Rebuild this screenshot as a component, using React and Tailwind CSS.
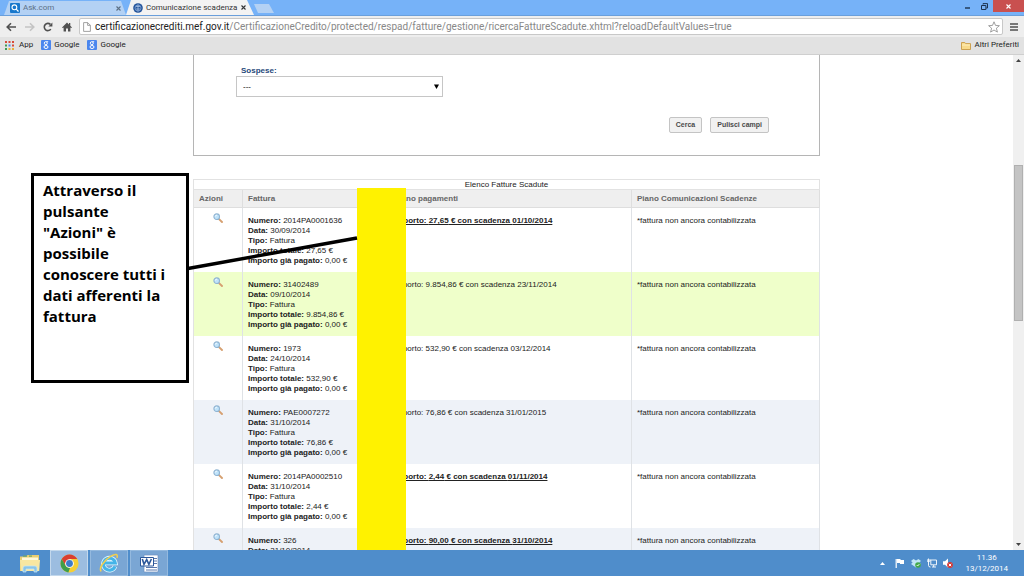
import React from "react";

const ui = "font-[Roboto,'Open_Sans',sans-serif]";

const invoices = [
  { numero: "2014PA0001636", data: "30/09/2014", totale: "27,65", scadenza: "01/10/2014", due: true, bg: "bg-white" },
  { numero: "31402489", data: "09/10/2014", totale: "9.854,86", scadenza: "23/11/2014", due: false, bg: "bg-[#efffca]" },
  { numero: "1973", data: "24/10/2014", totale: "532,90", scadenza: "03/12/2014", due: false, bg: "bg-white" },
  { numero: "PAE0007272", data: "31/10/2014", totale: "76,86", scadenza: "31/01/2015", due: false, bg: "bg-[#eef2f8]" },
  { numero: "2014PA0002510", data: "31/10/2014", totale: "2,44", scadenza: "01/11/2014", due: true, bg: "bg-white" },
  { numero: "326", data: "31/10/2014", totale: "90,00", scadenza: "31/10/2014", due: true, bg: "bg-[#eef2f8]" },
];

function Magnifier() {
  return (
    <svg className="size-[10px]" viewBox="0 0 10 10" aria-hidden="true">
      <path d="M5.8 5.8 9 9" stroke="#d6a070" strokeWidth="1.9" strokeLinecap="round" />
      <circle cx="3.7" cy="3.7" r="2.8" fill="#bfe3fa" stroke="#90b4d2" strokeWidth="1.1" />
      <path d="M2.3 3.5a1.5 1.5 0 0 1 1.5-1.3" stroke="#fff" strokeWidth=".9" fill="none" />
    </svg>
  );
}

function GoogleIcon() {
  return (
    <svg className="size-[10px]" viewBox="0 0 10 10" aria-hidden="true">
      <rect width="10" height="10" rx="1" fill="#4a86ee" />
      <circle cx="4.8" cy="3.2" r="1.5" fill="none" stroke="#fff" strokeWidth="1" />
      <ellipse cx="5" cy="7" rx="2" ry="1.5" fill="none" stroke="#fff" strokeWidth="1" />
      <path d="M5.4 1.6h1.8M5 4.6l.6 1" stroke="#fff" strokeWidth=".8" />
    </svg>
  );
}

function Close() {
  return (
    <svg className="size-[5px]" viewBox="0 0 5 5" aria-hidden="true">
      <path d="m.5.5 4 4m0-4-4 4" stroke="currentColor" strokeWidth="1.1" />
    </svg>
  );
}

function TabStrip() {
  return (
    <header className={`flex h-4 shrink-0 items-end border-b border-[#6a9fdb] bg-[#76b2f8] pl-1 text-[8px] leading-[14px] ${ui}`}>
      <div className="flex h-[14px] w-[122px] items-center bg-[#b3d1f4] pr-[5px] pl-[6px] text-[#5c7086] [clip-path:polygon(5px_0,117px_0,100%_100%,0_100%)]">
        <svg className="size-[10px]" viewBox="0 0 10 10" aria-hidden="true">
          <rect width="10" height="10" rx="1" fill="#1878cc" />
          <circle cx="4.4" cy="4.3" r="2.4" fill="none" stroke="#fff" strokeWidth="1.1" />
          <path d="m6.2 6.2 2.3 2.3" stroke="#fff" strokeWidth="1.2" />
        </svg>
        <span className="ml-[3px] flex-1">Ask.com</span>
        <button aria-label="Chiudi Ask.com"><Close /></button>
      </div>
      <div className="flex h-[15px] w-[128px] items-center bg-[#f3f3f3] pr-[10px] pl-[7px] text-[#333] [clip-path:polygon(5px_0,121px_0,100%_100%,0_100%)]">
        <svg className="size-[10px] shrink-0" viewBox="0 0 10 10" aria-hidden="true">
          <circle cx="5" cy="5" r="4.8" fill="#24549a" />
          <circle cx="5" cy="5" r="3" fill="none" stroke="#8fb2df" strokeWidth=".7" />
          <path d="M5 1.5v7M3 3.5h4M3 6h4" stroke="#b9cfec" strokeWidth=".7" />
        </svg>
        <span className="ml-[3px] flex-1 whitespace-nowrap">Comunicazione scadenza</span>
        <button className="ml-1" aria-label="Chiudi scheda"><Close /></button>
      </div>
      <button aria-label="Nuova scheda" className="mb-[2px] h-[9px] w-[20px] bg-[#b3d1f4] [clip-path:polygon(0_0,15px_0,100%_100%,4px_100%)]" />
      <div className="ml-auto flex self-start text-[#1c3350]">
        <button aria-label="Riduci a icona" className="grid h-3 w-4 place-items-center">
          <svg className="size-[6px]" viewBox="0 0 6 6"><path d="M0 5h5" stroke="currentColor" strokeWidth="1.4" /></svg>
        </button>
        <button aria-label="Ripristina" className="grid h-3 w-[17px] place-items-center">
          <svg className="size-[7px]" viewBox="0 0 7 7" fill="none" stroke="currentColor"><path d="M2 1.5V.6h4.5V5H5.2" /><path d="M.5 2.5h4.4v4H.5z" /></svg>
        </button>
        <button aria-label="Chiudi" className="grid h-3 w-[31px] place-items-center bg-[#c9504f] text-white"><Close /></button>
      </div>
    </header>
  );
}

function Toolbar() {
  return (
    <div className={`flex h-[21px] shrink-0 items-center bg-[#eeeeee] pr-[6px] pl-[6px] text-[#505050] ${ui}`}>
      <button aria-label="Indietro">
        <svg className="size-[10px]" viewBox="0 0 10 10" fill="none" stroke="currentColor" strokeWidth="1.6"><path d="M10 5H1.5M5 1.2 1.2 5 5 8.8" /></svg>
      </button>
      <button aria-label="Avanti" className="ml-[9px] text-[#c4c4c4]">
        <svg className="size-[10px]" viewBox="0 0 10 10" fill="none" stroke="currentColor" strokeWidth="1.6"><path d="M0 5h8.5M5 1.2 8.8 5 5 8.8" /></svg>
      </button>
      <button aria-label="Ricarica" className="ml-[8px]">
        <svg className="size-[10px]" viewBox="0 0 10 10"><path d="M7.8 7.1A3.6 3.6 0 1 1 7.4 2.4" fill="none" stroke="currentColor" strokeWidth="1.6" /><path d="M9.4.5v4H5.4z" fill="currentColor" /></svg>
      </button>
      <button aria-label="Pagina iniziale" className="ml-[9px]">
        <svg className="size-[10px]" viewBox="0 0 10 10" fill="currentColor"><path d="M5 .5 0 5.4l.8.7.8-.7v4H4V6.5h2v2.9h2.4v-4l.8.7.8-.7-1.7-1.6V1H7v1.5z" /></svg>
      </button>
      <div className="ml-[7px] flex h-[17px] min-w-0 flex-1 items-center rounded-[2px] border border-[#c8c8c8] bg-white pr-[2px] pl-[3px] text-[10px] leading-[15px]">
        <svg className="h-[10px] w-2 shrink-0" viewBox="0 0 8 10" fill="none" stroke="#999" strokeWidth=".9"><path d="M.6.6h4.1l2.7 2.7v6.1H.6zM4.6.6v2.8h2.8" /></svg>
        <label htmlFor="address" className="ml-[4px] text-[#222]">certificazionecrediti.mef.gov.it</label>
        <input
          id="address"
          className="min-w-0 flex-1 bg-transparent text-[#888] outline-none"
          defaultValue="/CertificazioneCredito/protected/respad/fatture/gestione/ricercaFattureScadute.xhtml?reloadDefaultValues=true"
        />
        <button aria-label="Aggiungi ai preferiti">
          <svg className="size-[12px]" viewBox="0 0 12 12" fill="#fff" stroke="#888" strokeWidth=".8"><path d="m6 .8 1.5 3.6 3.9.3-3 2.5 1 3.9L6 9l-3.4 2.1 1-3.9-3-2.5 3.9-.3z" /></svg>
        </button>
      </div>
      <button aria-label="Menu" className="ml-[7px]">
        <svg className="size-[8px]" viewBox="0 0 8 8" stroke="currentColor" strokeWidth="1.6"><path d="M0 1h8M0 4h8M0 7h8" /></svg>
      </button>
    </div>
  );
}

function Bookmarks() {
  return (
    <nav className={`flex h-[18px] shrink-0 items-center border-b border-[#cfcfcf] bg-[#e2e2e2] px-[5px] pb-px text-[8px] text-[#222] ${ui}`}>
      <a href="#app" className="flex items-center gap-[5px]">
        <svg className="size-[9px]" viewBox="0 0 9 9" aria-hidden="true">
          <g fill="#d84a38"><path d="M0 0h2v2H0zM3.5 0h2v2h-2zM7 0h2v2H7zM7 3.5h2v2H7z" /></g>
          <g fill="#3f9b52"><path d="M0 3.5h2v2H0zM0 7h2v2H0z" /></g>
          <path fill="#4b84e8" d="M3.5 3.5h2v2h-2z" />
          <path fill="#e8b23a" d="M3.5 7h2v2h-2zM7 7h2v2H7z" />
        </svg>
        App
      </a>
      <a href="#google-1" className="ml-[8px] flex items-center gap-[3px]"><GoogleIcon />Google</a>
      <a href="#google-2" className="ml-[8px] flex items-center gap-[3px]"><GoogleIcon />Google</a>
      <button className="ml-auto flex items-center gap-[4px]">
        <svg className="h-[9px] w-[10px]" viewBox="0 0 10 9" aria-hidden="true"><path d="M.5 8.5v-7h3.3l.9 1.1h4.8v5.9z" fill="#f8da8b" stroke="#c89a45" strokeWidth=".9" /><path d="M1 4h8" stroke="#fff0bd" /></svg>
        Altri Preferiti
      </button>
    </nav>
  );
}

function SearchPanel() {
  const button = "h-4 rounded-[2px] border border-[#c4c4c4] bg-[#f1f1f1] px-[6px] font-bold text-[#4a4a4a]";
  return (
    <form className="h-[101px] border border-t-0 border-[#b5b5b5] pt-[11px] text-[7px] leading-[10px]" onSubmit={(e) => e.preventDefault()}>
      <div className="ml-[42px] w-[207px]">
        <label htmlFor="sospese" className="ml-[5px] block text-[8px] font-bold text-[#26487a]">Sospese:</label>
        <div className="relative">
          <select id="sospese" className="block h-[21px] w-full appearance-none border border-[#c6c6c6] bg-white px-[6px] text-[8px] text-black">
            <option>---</option>
          </select>
          <svg className="pointer-events-none absolute top-2 right-[4px] h-[5px] w-[5px]" viewBox="0 0 5 5" aria-hidden="true"><path d="M0 .5h5L2.5 5z" /></svg>
        </div>
      </div>
      <div className="mt-5 mr-[50px] flex justify-end gap-2">
        <button className={button}>Cerca</button>
        <button type="button" className={button}>Pulisci campi</button>
      </div>
    </form>
  );
}

function InvoiceTable() {
  const head = "border-r border-b border-[#dedede] px-[5px] text-left text-[8px] font-bold text-[#666]";
  const cell = "border-r border-[#dfe2e6] px-[5px] pt-2";
  return (
    <table className="mt-[23px] w-full table-fixed border-separate border-spacing-0 border-t border-l border-[#e2e2e2] text-[8px] leading-[10px] text-[#222]">
      <caption className="h-[10px] border border-b-0 border-[#e2e2e2]">Elenco Fatture Scadute</caption>
      <colgroup>
        <col className="w-[49px]" />
        <col className="w-[146px]" />
        <col />
        <col className="w-[188px]" />
      </colgroup>
      <thead>
        <tr className="h-[18px] bg-[#efefef]">
          <th className={head}>Azioni</th>
          <th className={head}>Fattura</th>
          <th className={head}>Piano pagamenti</th>
          <th className={head}>Piano Comunicazioni Scadenze</th>
        </tr>
      </thead>
      <tbody>
        {invoices.map((i) => (
          <tr key={i.numero} className={`h-16 align-top ${i.bg}`}>
            <td className="border-r border-[#dfe2e6] pt-[5px]">
              <button aria-label={`Dettaglio fattura ${i.numero}`} className="mx-auto block"><Magnifier /></button>
            </td>
            <td className={cell}>
              <div><b>Numero:</b> {i.numero}</div>
              <div><b>Data:</b> {i.data}</div>
              <div><b>Tipo:</b> Fattura</div>
              <div><b>Importo totale:</b> {i.totale} €</div>
              <div><b>Importo già pagato:</b> 0,00 €</div>
            </td>
            <td className={cell}>
              <span className={i.due ? "font-bold underline" : ""}>Importo: {i.totale} € con scadenza {i.scadenza}</span>
            </td>
            <td className={cell}>*fattura non ancora contabilizzata</td>
          </tr>
        ))}
      </tbody>
    </table>
  );
}

function Annotations() {
  return (
    <>
      <div className="absolute top-[133px] bottom-0 left-[164px] w-[49px] bg-[#fff200]" />
      <svg className="pointer-events-none absolute top-[178px] left-[-6px] h-[40px] w-[172px]" viewBox="0 0 172 40" aria-hidden="true">
        <path d="M1 35.5 170 5" stroke="#000" strokeWidth="3.4" />
      </svg>
      <aside className="absolute top-[118px] left-[-162px] h-[210px] w-[158px] border-[3px] border-black bg-white pt-1 pr-[17px] pl-[9px] font-['Open_Sans','Noto_Sans',sans-serif] text-[15px] leading-[21px] font-bold text-black">
        Attraverso il pulsante "Azioni" è possibile conoscere tutti i dati afferenti la fattura
      </aside>
    </>
  );
}

function Taskbar() {
  const active = "grid h-full place-items-center border border-[#94b9de] bg-[#7aa6d4]";
  return (
    <footer className={`flex h-[26px] shrink-0 items-center bg-[#4f8dcb] pr-4 pl-[10px] text-white ${ui}`}>
      <button aria-label="Esplora file" className="grid h-full w-10 place-items-center">
        <svg className="h-[19px] w-[22px]" viewBox="0 0 22 19">
          <path d="M1 17V2.5h6L8.5 1H20v16z" fill="#e9cd72" />
          <path d="M3 3.5h16V7H3z" fill="#fff8d9" />
          <path d="M4 2.2h4M10 2.2h3" stroke="#70a86a" strokeWidth="1.2" />
          <path d="M1 6h20l-.8 11H1.8z" fill="#f8e7a1" />
          <path d="M4 18v-4q0-2 2-2h10q2 0 2 2v4h-3v-3H7v3z" fill="#8bc5e8" stroke="#c9e9f8" strokeWidth=".7" />
        </svg>
      </button>
      <button aria-label="Google Chrome" className="grid h-full w-[38px] place-items-center border border-[#c3d8ec] bg-[#9cbde0]">
        <svg className="size-[19px]" viewBox="0 0 20 20">
          <circle cx="10" cy="10" r="9.5" fill="#f5cf35" />
          <path d="M10 10 5.9 12.4 1.8 5.3A9.5 9.5 0 0 1 18.2 5.3H10z" fill="#da3e31" />
          <path d="M1.8 5.3 6 12.4q1.6 2.5 4.6 2.2L8.8 19.4A9.5 9.5 0 0 1 1.8 5.3z" fill="#3f9e4a" />
          <circle cx="10" cy="10" r="4.6" fill="#fff" />
          <circle cx="10" cy="10" r="3.6" fill="#3d7bc8" />
        </svg>
      </button>
      <button aria-label="Internet Explorer" className={`ml-[2px] w-[38px] ${active}`}>
        <svg className="size-[20px]" viewBox="0 0 20 20" fill="none">
          <path d="M16 13.4A6 6 0 1 1 16.3 10H5" stroke="#e4f7ff" strokeWidth="4.6" />
          <path d="M16 13.4A6 6 0 1 1 16.3 10H5" stroke="#45b4e8" strokeWidth="3" />
          <path d="M2.3 18.4C-.8 15.5 5 7.3 12 3.2c4.6-2.7 7.3-2.2 5.9 1.7" stroke="#f3cf4d" strokeWidth="1.5" />
        </svg>
      </button>
      <button aria-label="Microsoft Word" className={`ml-[2px] w-[38px] ${active}`}>
        <svg className="size-[19px]" viewBox="0 0 19 19">
          <path d="M4 1h14v17H4z" fill="#fff" stroke="#6d8fc0" strokeWidth=".7" />
          <path d="M13.5 4.5H17M13.5 7H17M13.5 9.5H17M6 13.5h11M6 16h11" stroke="#4669a4" strokeWidth=".9" />
          <path d="M.5 3.5h13v8.5H.5z" fill="#fff" stroke="#2b579a" />
          <path d="m2.3 5 1.7 5.3L6.7 5.6l2.2 4.7L11.4 5" fill="none" stroke="#2b579a" strokeWidth="1.6" />
        </svg>
      </button>
      <div className="ml-auto flex items-center gap-[6px]">
        <svg className="h-[3px] w-[5px]" viewBox="0 0 5 3" aria-hidden="true"><path d="M0 3h5L2.5 0z" fill="#fff" /></svg>
        <svg className="ml-1 size-[10px]" viewBox="0 0 10 10" aria-hidden="true"><path d="M1.2 1v9" stroke="#fff" strokeWidth="1.2" /><path d="M2 1h3.5v1H9v4H5V5H2z" fill="#fff" /></svg>
        <svg className="size-[10px]" viewBox="0 0 10 10" aria-hidden="true"><path d="m0 3 2.5-2L5 2.5 7.5 1 10 3 8.2 4.5 10 6 5 9.5 0 6l1.6-1.5z" fill="#bfe5f6" /><circle cx="7" cy="7" r="2.8" fill="#42a94b" /><path d="m5.7 7 1 1 1.7-2" fill="none" stroke="#fff" strokeWidth=".8" /></svg>
        <svg className="size-[10px]" viewBox="0 0 10 10" fill="none" stroke="#fff" aria-hidden="true"><path d="M3.8 2h5.7v4.8H3.8zM5 9h4M6.7 7v2M1.5.5v7q0 1.5 2 1.5M0 1v2.2h3V1" strokeWidth=".9" /></svg>
        <svg className="size-[10px]" viewBox="0 0 10 10" aria-hidden="true"><path d="M0 3.3h2L5 .5v9L2 6.7H0z" fill="#fff" /><circle cx="7" cy="7" r="2.9" fill="#d63a35" /><path d="m5.8 5.8 2.4 2.4m0-2.4L5.8 8.2" stroke="#fff" /></svg>
      </div>
      <div className="ml-3 text-center text-[8px] leading-[11px]">
        <div>11.36</div>
        <div>13/12/2014</div>
      </div>
    </footer>
  );
}

export default function App() {
  return (
    <div className="flex h-screen flex-col overflow-hidden bg-white font-['Liberation_Sans',Arial,sans-serif]">
      <TabStrip />
      <Toolbar />
      <Bookmarks />
      <div className="flex min-h-0 flex-1">
        <main className="flex flex-1 justify-center overflow-hidden">
          <div className="relative w-full max-w-[627px]">
            <SearchPanel />
            <InvoiceTable />
            <Annotations />
          </div>
        </main>
        <div className="flex w-[11px] flex-col items-center bg-[#f0f0f0] py-1" aria-hidden="true">
          <svg className="h-[3px] w-[5px]" viewBox="0 0 5 3"><path d="M0 3h5L2.5 0z" fill="#444" /></svg>
          <div className="mt-[103px] h-[156px] w-[9px] border border-[#b0b0b0] bg-[#c4c4c4]" />
          <svg className="mt-auto h-[3px] w-[5px]" viewBox="0 0 5 3"><path d="M0 0h5L2.5 3z" fill="#444" /></svg>
        </div>
      </div>
      <Taskbar />
    </div>
  );
}
